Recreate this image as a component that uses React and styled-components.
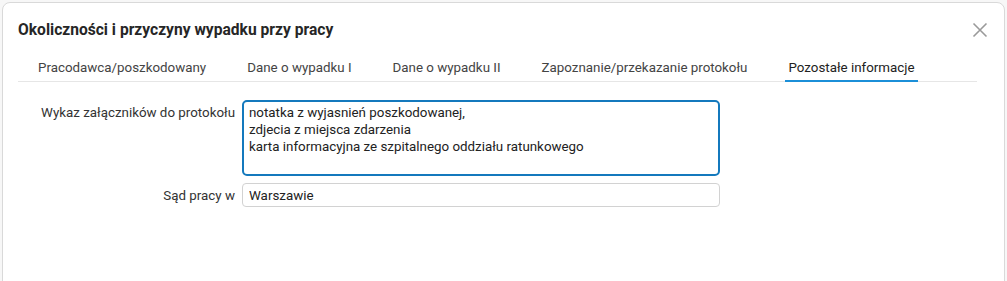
import styled, {createGlobalStyle} from 'styled-components';

const GlobalStyle = createGlobalStyle`
	html, body {
		margin: 0;
		padding: 0;
		background: #f7f7f7;
		font-family: Roboto, "Liberation Sans", sans-serif;
	}
`;

const tabs = [
	'Pracodawca/poszkodowany',
	'Dane o wypadku I',
	'Dane o wypadku II',
	'Zapoznanie/przekazanie protokołu',
	'Pozostałe informacje',
];

export default function App() {
	return (
		<>
			<GlobalStyle />
			<Page>
				<Dialog>
					<Header>
						<Title>Okoliczności i przyczyny wypadku przy pracy</Title>
						<CloseButton aria-label="Zamknij">
							<svg width="16" height="16" viewBox="0 0 16 16">
								<path d="M1.5 1.5 L14.5 14.5 M14.5 1.5 L1.5 14.5" stroke="#9a9a9a" strokeWidth="1.6" fill="none" />
							</svg>
						</CloseButton>
					</Header>
					<TabStrip>
						{tabs.map((t, i) => (
							<Tab key={t} active={i === tabs.length - 1}>
								{t}
							</Tab>
						))}
					</TabStrip>
					<Form>
						<Label>Wykaz załączników do protokołu</Label>
						<TextArea
							defaultValue={
								'notatka z wyjasnień poszkodowanej,\nzdjecia z miejsca zdarzenia\nkarta informacyjna ze szpitalnego oddziału ratunkowego'
							}
						/>
						<Label>Sąd pracy w</Label>
						<Input defaultValue="Warszawie" />
					</Form>
				</Dialog>
			</Page>
		</>
	);
}

// #################################
// ########   STYLING    ###########
// #################################

const Page = styled.div`
	width: 1007px;
	height: 281px;
	padding: 2px 2px 0 2px;
	box-sizing: border-box;
	overflow: hidden;
`;

const Dialog = styled.div`
	height: 300px;
	background: #fff;
	border: 1px solid #d9d9d9;
	border-radius: 8px 8px 0 0;
	padding: 17px 15px 0 15px;
	box-sizing: border-box;
`;

const Header = styled.div`
	display: flex;
	align-items: center;
	justify-content: space-between;
`;

const Title = styled.h1`
	margin: 0;
	font-size: 15.6px;
	line-height: 20px;
	font-weight: 700;
	color: #262626;
`;

const CloseButton = styled.button`
	border: none;
	background: none;
	padding: 0;
	margin-right: 1px;
	width: 16px;
	height: 16px;
	display: flex;
	cursor: pointer;
`;

const TabStrip = styled.div`
	display: flex;
	gap: 35px;
	margin-top: 10px;
	padding-left: 17px;
	border-bottom: 1px solid #e6e6e6;
	margin-right: 12px;
`;

const Tab = styled.div`
	padding: 9px 3px 3px 3px;
	font-size: 13.35px;
	line-height: 18px;
	color: ${props => (props.active ? '#222' : '#444')};
	border-bottom: 2px solid ${props => (props.active ? '#1b8fd8' : 'transparent')};
	margin-bottom: -1px;
`;

const Form = styled.div`
	display: grid;
	grid-template-columns: 217px 478px;
	column-gap: 7px;
	row-gap: 7px;
	margin-top: 18px;
	align-items: start;
`;

const Label = styled.label`
	text-align: right;
	font-size: 13.35px;
	line-height: 17px;
	color: #333;
	padding-top: 4px;
`;

const TextArea = styled.textarea`
	width: 100%;
	height: 76px;
	box-sizing: border-box;
	border: 2px solid #1479bd;
	border-radius: 5px;
	padding: 2px 5px;
	font-family: Roboto, "Liberation Sans", sans-serif;
	font-size: 13.35px;
	line-height: 17px;
	color: #222;
	resize: none;
	outline: none;
`;

const Input = styled.input`
	width: 100%;
	height: 24px;
	box-sizing: border-box;
	border: 1px solid #d2d2d2;
	border-radius: 4px;
	padding: 0 6px;
	font-family: Roboto, "Liberation Sans", sans-serif;
	font-size: 13.35px;
	color: #222;
	outline: none;
`;
